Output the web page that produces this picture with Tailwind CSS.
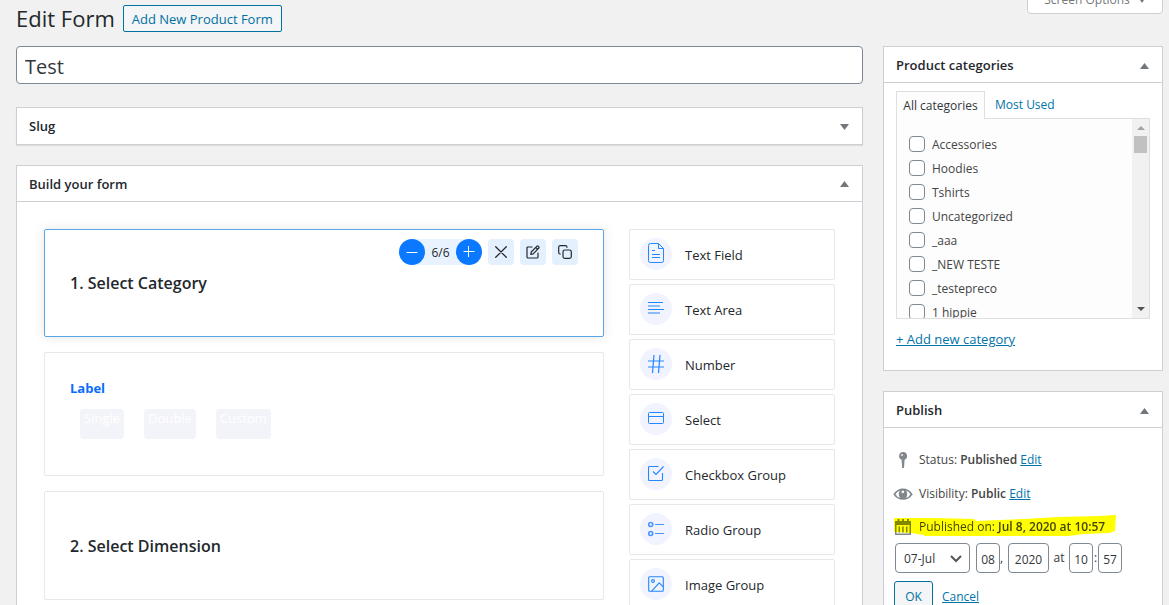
<!DOCTYPE html>
<html lang="en">
<head>
<meta charset="utf-8">
<meta name="viewport" content="width=device-width, initial-scale=1">
<title>Edit Form</title>
<script src="https://cdn.jsdelivr.net/npm/@tailwindcss/browser@4"></script>
</head>
<body class="h-screen overflow-hidden bg-[#f1f1f1] font-['Open_Sans','Noto_Sans',sans-serif] text-xs text-[#444]">

<header class="flex h-[46px] items-start justify-between pl-4 pr-1.5">
  <div class="flex items-start gap-2 pt-[5px]">
    <h1 class="text-[22px] leading-[27px] text-[#23282d]">Edit Form</h1>
    <a href="#" class="flex h-[27px] items-center rounded-[2px] border border-[#0071a1] bg-[#f3f5f6] px-2 pt-0.5 text-[13px] font-medium text-[#0071a1]">Add New Product Form</a>
  </div>
  <button type="button" class="-mt-4 flex h-[30px] w-[136px] items-center justify-center gap-2 rounded-b border border-[#ccd0d4] bg-white pt-0.5 text-[#72777c]">Screen Options <svg width="8" height="6" viewBox="0 0 8 6" fill="#72777c" aria-hidden="true"><path d="M0 0h8L4 6z"/></svg></button>
</header>

<div class="flex items-start gap-5 pl-4 pr-1.5">
  <main class="min-w-0 flex-1">
    <input type="text" aria-label="Form title" value="Test" class="h-[38px] w-full rounded border border-[#7e8993] bg-white px-2 pt-0.5 text-xl text-[#32373c]">

    <section class="mt-[23px] flex h-[38px] items-center justify-between border border-[#ccd0d4] bg-white px-3 shadow-[0_1px_1px_rgba(0,0,0,0.08)]">
      <h2 class="pt-0.5 text-[13px] font-semibold text-[#23282d]">Slug</h2>
      <button type="button" aria-label="Expand Slug" class="p-[1px] pt-[3px]"><svg width="9" height="6" viewBox="0 0 9 6" fill="#72777c"><path d="M0 0h9L4.500 6z"/></svg></button>
    </section>

    <section class="mt-5 border border-[#ccd0d4] bg-white">
      <div class="flex h-9 items-center justify-between border-b border-[#ccd0d4] px-3">
        <h2 class="pt-0.5 text-[13px] font-semibold text-[#23282d]">Build your form</h2>
        <button type="button" aria-label="Collapse Build your form" class="p-[1px]"><svg width="9" height="6" viewBox="0 0 9 6" fill="#72777c"><path d="M0 6h9L4.500 0z"/></svg></button>
      </div>
      <div class="flex gap-[25px] px-[27px] pb-7 pt-[27px]">
        <div class="flex min-w-0 flex-1 flex-col gap-[15px]">
          <article class="h-[108px] rounded-[2px] border border-[#5aa5e6] bg-white pl-[25px] pr-[25px] pt-[9px] shadow-[0_0_12px_rgba(0,0,0,0.1)]">
            <div class="flex items-center justify-end gap-1.5">
              <div class="flex h-[26px] w-[83px] items-center justify-between rounded-full bg-[#e9f2ff] text-[#23282d]">
                <button type="button" aria-label="Narrower" class="flex size-[26px] items-center justify-center rounded-full bg-[#0a78ff]"><svg width="12" height="12" viewBox="0 0 12 12" stroke="#fff" stroke-width="1"><path d="M0.500 6.500h11"/></svg></button>
                <span class="pt-0.5">6/6</span>
                <button type="button" aria-label="Wider" class="flex size-[26px] items-center justify-center rounded-full bg-[#0a78ff]"><svg width="12" height="12" viewBox="0 0 12 12" stroke="#fff" stroke-width="1"><path d="M0.500 5.500h11M5.500 0v11"/></svg></button>
              </div>
              <button type="button" aria-label="Remove" class="flex size-[26px] items-center justify-center rounded bg-[#e5f0ff]"><svg width="12" height="12" viewBox="0 0 12 12" stroke="#23282d" stroke-width="1.300" stroke-linecap="round"><path d="M0.700 0.700l10.600 10.600M11.300 0.700L0.700 11.300"/></svg></button>
              <button type="button" aria-label="Edit" class="flex size-[26px] items-center justify-center rounded bg-[#e5f0ff]"><svg width="14" height="14" viewBox="0 0 14 14" fill="none" stroke="#23282d" stroke-width="1.200" stroke-linejoin="round" stroke-linecap="round"><path d="M6 2H2Q1 2 1 3v9q0 1 1 1h9q1 0 1-1V8M4.800 9.300l.4-2.300L11 1.200q.6-.5 1.200 0l.6.600q.5.600 0 1.200L7.200 8.800zM9.800 2.500l1.700 1.700"/></svg></button>
              <button type="button" aria-label="Duplicate" class="flex size-[26px] items-center justify-center rounded bg-[#e5f0ff]"><svg width="14" height="14" viewBox="0 0 14 14" fill="none" stroke="#23282d" stroke-width="1.200" stroke-linecap="round"><rect x="5" y="5" width="8.300" height="8.300" rx="1.800"/><path d="M2.300 9Q.7 9 .7 7.400V2.300Q.7.700 2.300.700h5.100Q9 .7 9 2.300"/></svg></button>
            </div>
            <h3 class="mt-1.5 text-base leading-6 font-semibold text-[#23282d]">1. Select Category</h3>
          </article>

          <article class="h-[124px] rounded-[2px] border border-[#e8e8e8] bg-white px-[25px] pt-[25px]">
            <h3 class="text-[13px] leading-5 font-bold text-[#0a6cff]">Label</h3>
            <div class="mt-[11px] flex gap-5 pl-[10px] text-[13px] leading-[18px] text-white">
              <span class="h-[30px] rounded bg-[#f3f4f9] px-1">Single</span>
              <span class="h-[30px] rounded bg-[#f3f4f9] px-1">Double</span>
              <span class="h-[30px] rounded bg-[#f3f4f9] px-1">Custom</span>
            </div>
          </article>

          <article class="flex h-[109px] items-center rounded-[2px] border border-[#e8e8e8] bg-white px-[25px]">
            <h3 class="text-base leading-6 font-semibold text-[#23282d]">2. Select Dimension</h3>
          </article>
        </div>

        <div class="flex w-[206px] shrink-0 flex-col gap-1 text-[13px] leading-[34px] text-[#23282d]">
          <button type="button" class="flex h-[51px] items-start gap-[13px] rounded-[2px] border border-[#e8e8e8] bg-white px-[10px] pt-2">
            <span class="flex size-8 items-center justify-center rounded-full bg-[#f1f4ff] pb-0.5"><svg width="18" height="20" viewBox="0 0 18 20" fill="none" stroke="#2387ff" stroke-width="1"><path d="M11.500.5h-8q-2 0-2 2v15q0 2 2 2h11q2 0 2-2v-12zM11.500.500v5h5M5 7.500h3M5 11.500h8M5 14.500h8"/></svg></span>Text Field</button>
          <button type="button" class="flex h-[51px] items-start gap-[13px] rounded-[2px] border border-[#e8e8e8] bg-white px-[10px] pt-2">
            <span class="flex size-8 items-center justify-center rounded-full bg-[#f1f4ff] pb-0.5"><svg width="16" height="12" viewBox="0 0 16 12" fill="none" stroke="#2387ff" stroke-width="1"><path d="M0 .5h15M0 4h12M0 7.500h16M0 11h12"/></svg></span>Text Area</button>
          <button type="button" class="flex h-[51px] items-start gap-[13px] rounded-[2px] border border-[#e8e8e8] bg-white px-[10px] pt-2">
            <span class="flex size-8 items-center justify-center rounded-full bg-[#f1f4ff]"><svg width="16" height="18" viewBox="0 0 16 18" fill="none" stroke="#2387ff" stroke-width="1.200"><path d="M0 6h16M0 12h16M6 0L4.500 18M12 0l-1.500 18"/></svg></span>Number</button>
          <button type="button" class="flex h-[51px] items-start gap-[13px] rounded-[2px] border border-[#e8e8e8] bg-white px-[10px] pt-2">
            <span class="flex size-8 items-center justify-center rounded-full bg-[#f1f4ff] pb-0.5"><svg width="16" height="14" viewBox="0 0 16 14" fill="none" stroke="#2387ff" stroke-width="1"><rect x=".5" y="1.500" width="15" height="11" rx="1"/><path d="M.5 5.500h15"/></svg></span>Select</button>
          <button type="button" class="flex h-[51px] items-start gap-[13px] rounded-[2px] border border-[#e8e8e8] bg-white px-[10px] pt-2">
            <span class="flex size-8 items-center justify-center rounded-full bg-[#f1f4ff] pb-0.5"><svg width="16" height="16" viewBox="0 0 16 16" fill="none" stroke="#2387ff" stroke-width="1.100"><path d="M10.500 1.500h-9q-1 0-1 1v12q0 1 1 1h12q1 0 1-1V8M5 6.500l3 3 7.500-8"/></svg></span>Checkbox Group</button>
          <button type="button" class="flex h-[51px] items-start gap-[13px] rounded-[2px] border border-[#e8e8e8] bg-white px-[10px] pt-2">
            <span class="flex size-8 items-center justify-center rounded-full bg-[#f1f4ff]"><svg width="16" height="16" viewBox="0 0 16 16" fill="none" stroke="#4795ff"><circle cx="2.700" cy="3.500" r="2" stroke-width="1.600"/><circle cx="2.700" cy="12.500" r="2" stroke-width="1.600"/><path d="M7 3.500h9M7 12.500h9"/></svg></span>Radio Group</button>
          <button type="button" class="flex h-[51px] items-start gap-[13px] rounded-[2px] border border-[#e8e8e8] bg-white px-[10px] pt-2">
            <span class="flex size-8 items-center justify-center rounded-full bg-[#f1f4ff]"><svg width="16" height="16" viewBox="0 0 16 16" fill="none" stroke="#2387ff" stroke-width="1.100"><rect x=".7" y=".7" width="14.600" height="14.600" rx="1"/><circle cx="5" cy="5" r="1.400"/><path d="M3.500 15.300l7.700-8.500 4 4"/></svg></span>Image Group</button>
        </div>
      </div>
    </section>
  </main>

  <aside class="flex w-[280px] shrink-0 flex-col gap-5">
    <section class="h-[325px] border border-[#ccd0d4] bg-white">
      <div class="flex h-9 items-center justify-between border-b border-[#ccd0d4] px-3">
        <h2 class="pt-0.5 text-[13px] font-semibold text-[#23282d]">Product categories</h2>
        <button type="button" aria-label="Collapse Product categories" class="p-[1px] pt-[3px]"><svg width="9" height="6" viewBox="0 0 9 6" fill="#72777c"><path d="M0 6h9L4.500 0z"/></svg></button>
      </div>
      <div class="px-3 pt-2">
        <div class="relative z-10 -mb-px flex">
          <a href="#" class="flex h-7 w-[89px] items-center justify-center whitespace-nowrap border border-b-0 border-[#dfdfdf] bg-[#fdfdfd] text-[#32373c]">All categories</a>
          <a href="#" class="flex h-7 items-center pl-[10px] text-[#0073aa]">Most Used</a>
        </div>
        <div class="flex h-[201px] overflow-hidden border border-[#dfdfdf] bg-[#fdfdfd]">
          <div class="flex-1 pl-3 pt-[13px]">
            <label class="flex h-6 items-center gap-[7px]"><input type="checkbox" class="size-4 appearance-none rounded border border-[#7e8993] bg-white"><span class="pt-0.5">Accessories</span></label>
            <label class="flex h-6 items-center gap-[7px]"><input type="checkbox" class="size-4 appearance-none rounded border border-[#7e8993] bg-white"><span class="pt-0.5">Hoodies</span></label>
            <label class="flex h-6 items-center gap-[7px]"><input type="checkbox" class="size-4 appearance-none rounded border border-[#7e8993] bg-white"><span class="pt-0.5">Tshirts</span></label>
            <label class="flex h-6 items-center gap-[7px]"><input type="checkbox" class="size-4 appearance-none rounded border border-[#7e8993] bg-white"><span class="pt-0.5">Uncategorized</span></label>
            <label class="flex h-6 items-center gap-[7px]"><input type="checkbox" class="size-4 appearance-none rounded border border-[#7e8993] bg-white"><span class="pt-0.5">_aaa</span></label>
            <label class="flex h-6 items-center gap-[7px]"><input type="checkbox" class="size-4 appearance-none rounded border border-[#7e8993] bg-white"><span class="pt-0.5">_NEW TESTE</span></label>
            <label class="flex h-6 items-center gap-[7px]"><input type="checkbox" class="size-4 appearance-none rounded border border-[#7e8993] bg-white"><span class="pt-0.5">_testepreco</span></label>
            <label class="flex h-6 items-center gap-[7px]"><input type="checkbox" class="size-4 appearance-none rounded border border-[#7e8993] bg-white"><span class="pt-0.5">1 hippie</span></label>
          </div>
          <div class="flex w-[17px] flex-col items-center bg-[#f1f1f1]" aria-hidden="true">
            <svg class="mt-[7px]" width="8" height="4" viewBox="0 0 8 4" fill="#a3a3a3"><path d="M0 4h8L4 0z"/></svg>
            <div class="mt-[6px] h-[17px] w-[13px] bg-[#c1c1c1]"></div>
            <svg class="mb-[7px] mt-auto" width="8" height="4" viewBox="0 0 8 4" fill="#505050"><path d="M0 0h8L4 4z"/></svg>
          </div>
        </div>
        <a href="#" class="mt-[10px] inline-block text-[13px] leading-5 font-medium text-[#0073aa] underline">+ Add new category</a>
      </div>
    </section>

    <section class="border border-[#ccd0d4] bg-white">
      <div class="flex h-9 items-center justify-between border-b border-[#ccd0d4] px-3">
        <h2 class="pt-0.5 text-[13px] font-semibold text-[#23282d]">Publish</h2>
        <button type="button" aria-label="Collapse Publish" class="p-[1px] pt-[3px]"><svg width="9" height="6" viewBox="0 0 9 6" fill="#72777c"><path d="M0 6h9L4.500 0z"/></svg></button>
      </div>
      <div class="px-[9px] pb-4 pt-[15px]">
        <div class="flex h-[34px] items-center gap-[6px]">
          <svg width="20" height="20" viewBox="0 0 20 20" aria-hidden="true"><path d="M10 2a4 4 0 0 1 1.600 7.700L11 18H9.200L8.600 9.700A4 4 0 0 1 10 2z" fill="#82878c"/><circle cx="9" cy="5" r="1.100" fill="#e3e5e7"/></svg>
          <span>Status: <b class="font-semibold">Published</b> <a href="#" class="text-[#0073aa] underline">Edit</a></span>
        </div>
        <div class="flex h-[34px] items-center gap-[6px]">
          <svg width="20" height="20" viewBox="0 0 20 20" aria-hidden="true"><path d="M.3 10.300C5 2.700 15 2.700 19.700 10.300 15 17.700 5 17.700.3 10.300z" fill="#82878c"/><path d="M2.500 10.300Q4 7.500 7 6.500 4.500 10 7 14 4 13 2.500 10.300zM17.500 10.300Q16 7.500 13 6.500 15.500 10 13 14 16 13 17.500 10.300z" fill="#fff"/><path d="M10 6.500q1.600.300 1 1.800-.9 1.400-2.400.500Q8 7 10 6.500z" fill="#fff"/></svg>
          <span>Visibility: <b class="font-semibold">Public</b> <a href="#" class="text-[#0073aa] underline">Edit</a></span>
        </div>
        <div class="relative isolate flex h-8 items-center gap-[6px]">
          <svg width="20" height="20" viewBox="0 0 20 20" aria-hidden="true"><path d="M2 4h2.500V2h2v2h2.500V2h2v2H14V2h2v2h2v14H2zM3.500 8v8.500h13V8zM5.500 9.500h1.500v6H5.500zM9.200 9.500h1.500v6H9.200zM13 9.500h1.500v6H13z" fill="#82878c" fill-rule="evenodd"/></svg>
          <span class="text-[#444]">Published on: <b class="font-semibold">Jul 8, 2020 at 10:57</b></span>
          <svg class="absolute left-px top-1 mix-blend-multiply" width="222" height="22" viewBox="0 0 222 22" aria-hidden="true"><path d="M0 3L40 3 80 4 82 6 130 4 165 2 205 1 222 0 221 16 215 18 190 19 175 21 30 21 30 20 17 18 0 17z" fill="#ff0"/></svg>
        </div>
        <div class="flex h-[30px] items-center pl-[2px] text-[#32373c]">
          <div class="relative">
            <select aria-label="Month" class="block h-[30px] w-[75px] appearance-none rounded border border-[#7e8993] bg-white pl-2 pt-0.5"><option>07-Jul</option></select>
            <svg class="pointer-events-none absolute right-2 top-3" width="12" height="8" viewBox="0 0 12 8" fill="none" stroke="#555" stroke-width="2" aria-hidden="true"><path d="M1 1l5 5 5-5"/></svg>
          </div>
          <input aria-label="Day" value="08" class="ml-1.5 h-[30px] w-6 rounded border border-[#7e8993] bg-white pt-0.5 text-center">
          <span class="w-2">,</span>
          <input aria-label="Year" value="2020" class="h-[30px] w-[41px] rounded border border-[#7e8993] bg-white pt-0.5 text-center">
          <span class="w-5 text-center">at</span>
          <input aria-label="Hour" value="10" class="h-[30px] w-6 rounded border border-[#7e8993] bg-white pt-0.5 text-center">
          <span class="w-[5px] text-center">:</span>
          <input aria-label="Minute" value="57" class="h-[30px] w-6 rounded border border-[#7e8993] bg-white pt-0.5 text-center">
        </div>
        <div class="mt-2 flex items-center gap-[9px] pl-px">
          <button type="button" class="h-[30px] w-[39px] rounded-[3px] border border-[#0071a1] bg-[#f3f5f6] pt-0.5 text-[#0071a1]">OK</button>
          <a href="#" class="pt-0.5 text-[#0073aa] underline">Cancel</a>
        </div>
      </div>
    </section>
  </aside>
</div>
</body>
</html>
